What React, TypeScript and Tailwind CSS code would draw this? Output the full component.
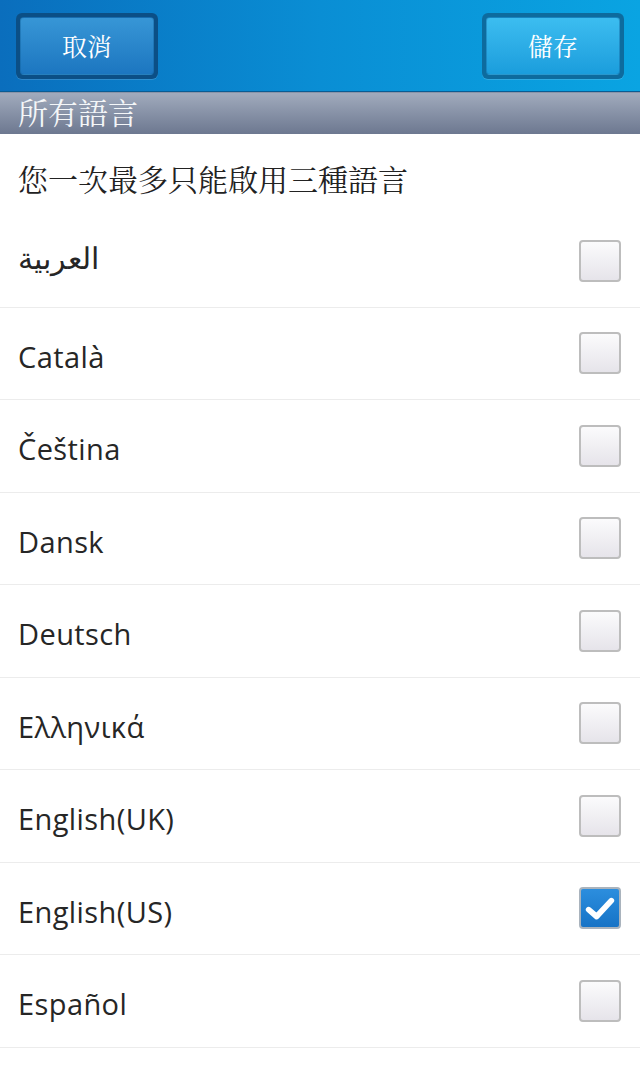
import React from "react";

const languages = [
  { name: "العربية", checked: false, arabic: true },
  { name: "Català", checked: false },
  { name: "Čeština", checked: false },
  { name: "Dansk", checked: false },
  { name: "Deutsch", checked: false },
  { name: "Ελληνικά", checked: false },
  { name: "English(UK)", checked: false },
  { name: "English(US)", checked: true },
  { name: "Español", checked: false },
];

const cjk = { fontFamily: '"Noto Serif CJK TC", "Noto Sans CJK TC", "Liberation Serif", serif' };
const latin = { fontFamily: '"Open Sans", "Noto Sans", sans-serif' };

function HeaderButton({ label, tone }: { label: string; tone: "dark" | "light" }) {
  const inner =
    tone === "dark"
      ? "bg-gradient-to-b from-[#3796d6] to-[#1c76c0]"
      : "bg-gradient-to-b from-[#3cbdf0] to-[#1a9ddc]";
  const outer = tone === "dark" ? "bg-[#0b4f86]" : "bg-[#0d6b9e]";
  return (
    <div className={`${outer} rounded-[6px] p-[4px] w-[142px] h-[66px] shadow-[0_1px_0_rgba(255,255,255,0.15)]`}>
      <div
        className={`${inner} h-full rounded-[4px] flex items-center justify-center text-white text-[25px] border border-[#0f5f98]/40`}
        style={cjk}
      >
        {label}
      </div>
    </div>
  );
}

function Checkbox({ checked }: { checked: boolean }) {
  if (checked) {
    return (
      <div className="w-[42px] h-[42px] rounded-[4px] border-[2px] border-[#a9b3bd] bg-gradient-to-b from-[#2c8ede] to-[#1673c6] flex items-center justify-center">
        <svg width="34" height="34" viewBox="0 0 30 30">
          <path d="M5 16.5 L12 22.5 L25 8.5" fill="none" stroke="#ffffff" strokeWidth="5" strokeLinecap="round" strokeLinejoin="round" />
        </svg>
      </div>
    );
  }
  return (
    <div className="w-[42px] h-[42px] rounded-[4px] border-[2px] border-[#bdbdbd] bg-gradient-to-b from-[#fbfbfc] to-[#e6e4ea]" />
  );
}

export default function App() {
  return (
    <div className="w-[640px] h-[1067px] overflow-hidden bg-white">
      <div className="h-[92px] bg-gradient-to-r from-[#0a6ebd] via-[#0a8ed4] to-[#0aa4e2] flex items-start justify-between px-[16px] pt-[13px] border-b border-[#0a5c93]">
        <HeaderButton label="取消" tone="dark" />
        <HeaderButton label="儲存" tone="light" />
      </div>
      <div
        className="h-[42px] bg-gradient-to-b from-[#a1abbd] to-[#6d7890] flex items-center px-[18px] pb-[6px] text-[30px] text-[#f4f6f8] border-t border-[#8a94a8] leading-none"
        style={cjk}
      >
        所有語言
      </div>
      <div className="h-[81px] flex items-center pt-[8px] px-[18px] text-[30px] text-[#222222]" style={cjk}>
        您一次最多只能啟用三種語言
      </div>
      {languages.map((lang) => (
        <div
          key={lang.name}
          className="h-[92.5px] flex items-center justify-between pl-[18px] pr-[19px] border-b border-[#ececec]"
        >
          <span
            className={`text-[#262626] ${lang.arabic ? "text-[30px] pb-[4px]" : "text-[29px] tracking-[0.4px] pt-[6px]"}`}
            style={lang.arabic ? { fontFamily: '"DejaVu Serif", "Liberation Serif", serif' } : latin}
          >
            {lang.name}
          </span>
          <Checkbox checked={lang.checked} />
        </div>
      ))}
    </div>
  );
}
